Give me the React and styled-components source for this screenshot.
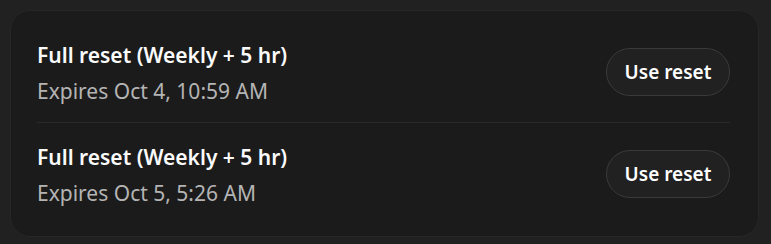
import React from 'react';
import styled, { createGlobalStyle } from 'styled-components';

const GlobalStyle = createGlobalStyle`
  html, body {
    margin: 0;
    background: #212121;
    font-family: "Noto Sans", "Open Sans", sans-serif;
  }
`;

const Page = styled.div`
  padding: 10px 12px 7px 10px;
`;

const Card = styled.div`
  background: #1b1b1b;
  border: 1px solid #272727;
  border-radius: 20px;
  padding: 10px 28px 12px 26px;
`;

const Row = styled.div`
  display: flex;
  align-items: center;
  justify-content: space-between;
  height: 101px;
  border-top: ${(p) => (p.first ? 'none' : '1px solid #2a2a2a')};
`;

const Info = styled.div`
  display: flex;
  flex-direction: column;
  gap: 8px;
  padding-top: 2px;
`;

const Title = styled.div`
  color: #fafafa;
  font-size: 21px;
  font-weight: 600;
  line-height: 28px;
`;

const Expires = styled.div`
  color: #b4b4b4;
  font-size: 21px;
  line-height: 28px;
`;

const ResetButton = styled.button`
  height: 48px;
  width: 124px;
  border-radius: 24px;
  border: 1px solid #3a3a3a;
  background: #212121;
  color: #ffffff;
  font-family: inherit;
  font-size: 19px;
  font-weight: 600;
  cursor: pointer;
`;

const resets = [
  { title: 'Full reset (Weekly + 5 hr)', expires: 'Expires Oct 4, 10:59 AM' },
  { title: 'Full reset (Weekly + 5 hr)', expires: 'Expires Oct 5, 5:26 AM' },
];

export default function App() {
  return (
    <Page>
      <GlobalStyle />
      <Card>
        {resets.map((r, i) => (
          <Row key={i} first={i === 0}>
            <Info>
              <Title>{r.title}</Title>
              <Expires>{r.expires}</Expires>
            </Info>
            <ResetButton>Use reset</ResetButton>
          </Row>
        ))}
      </Card>
    </Page>
  );
}
